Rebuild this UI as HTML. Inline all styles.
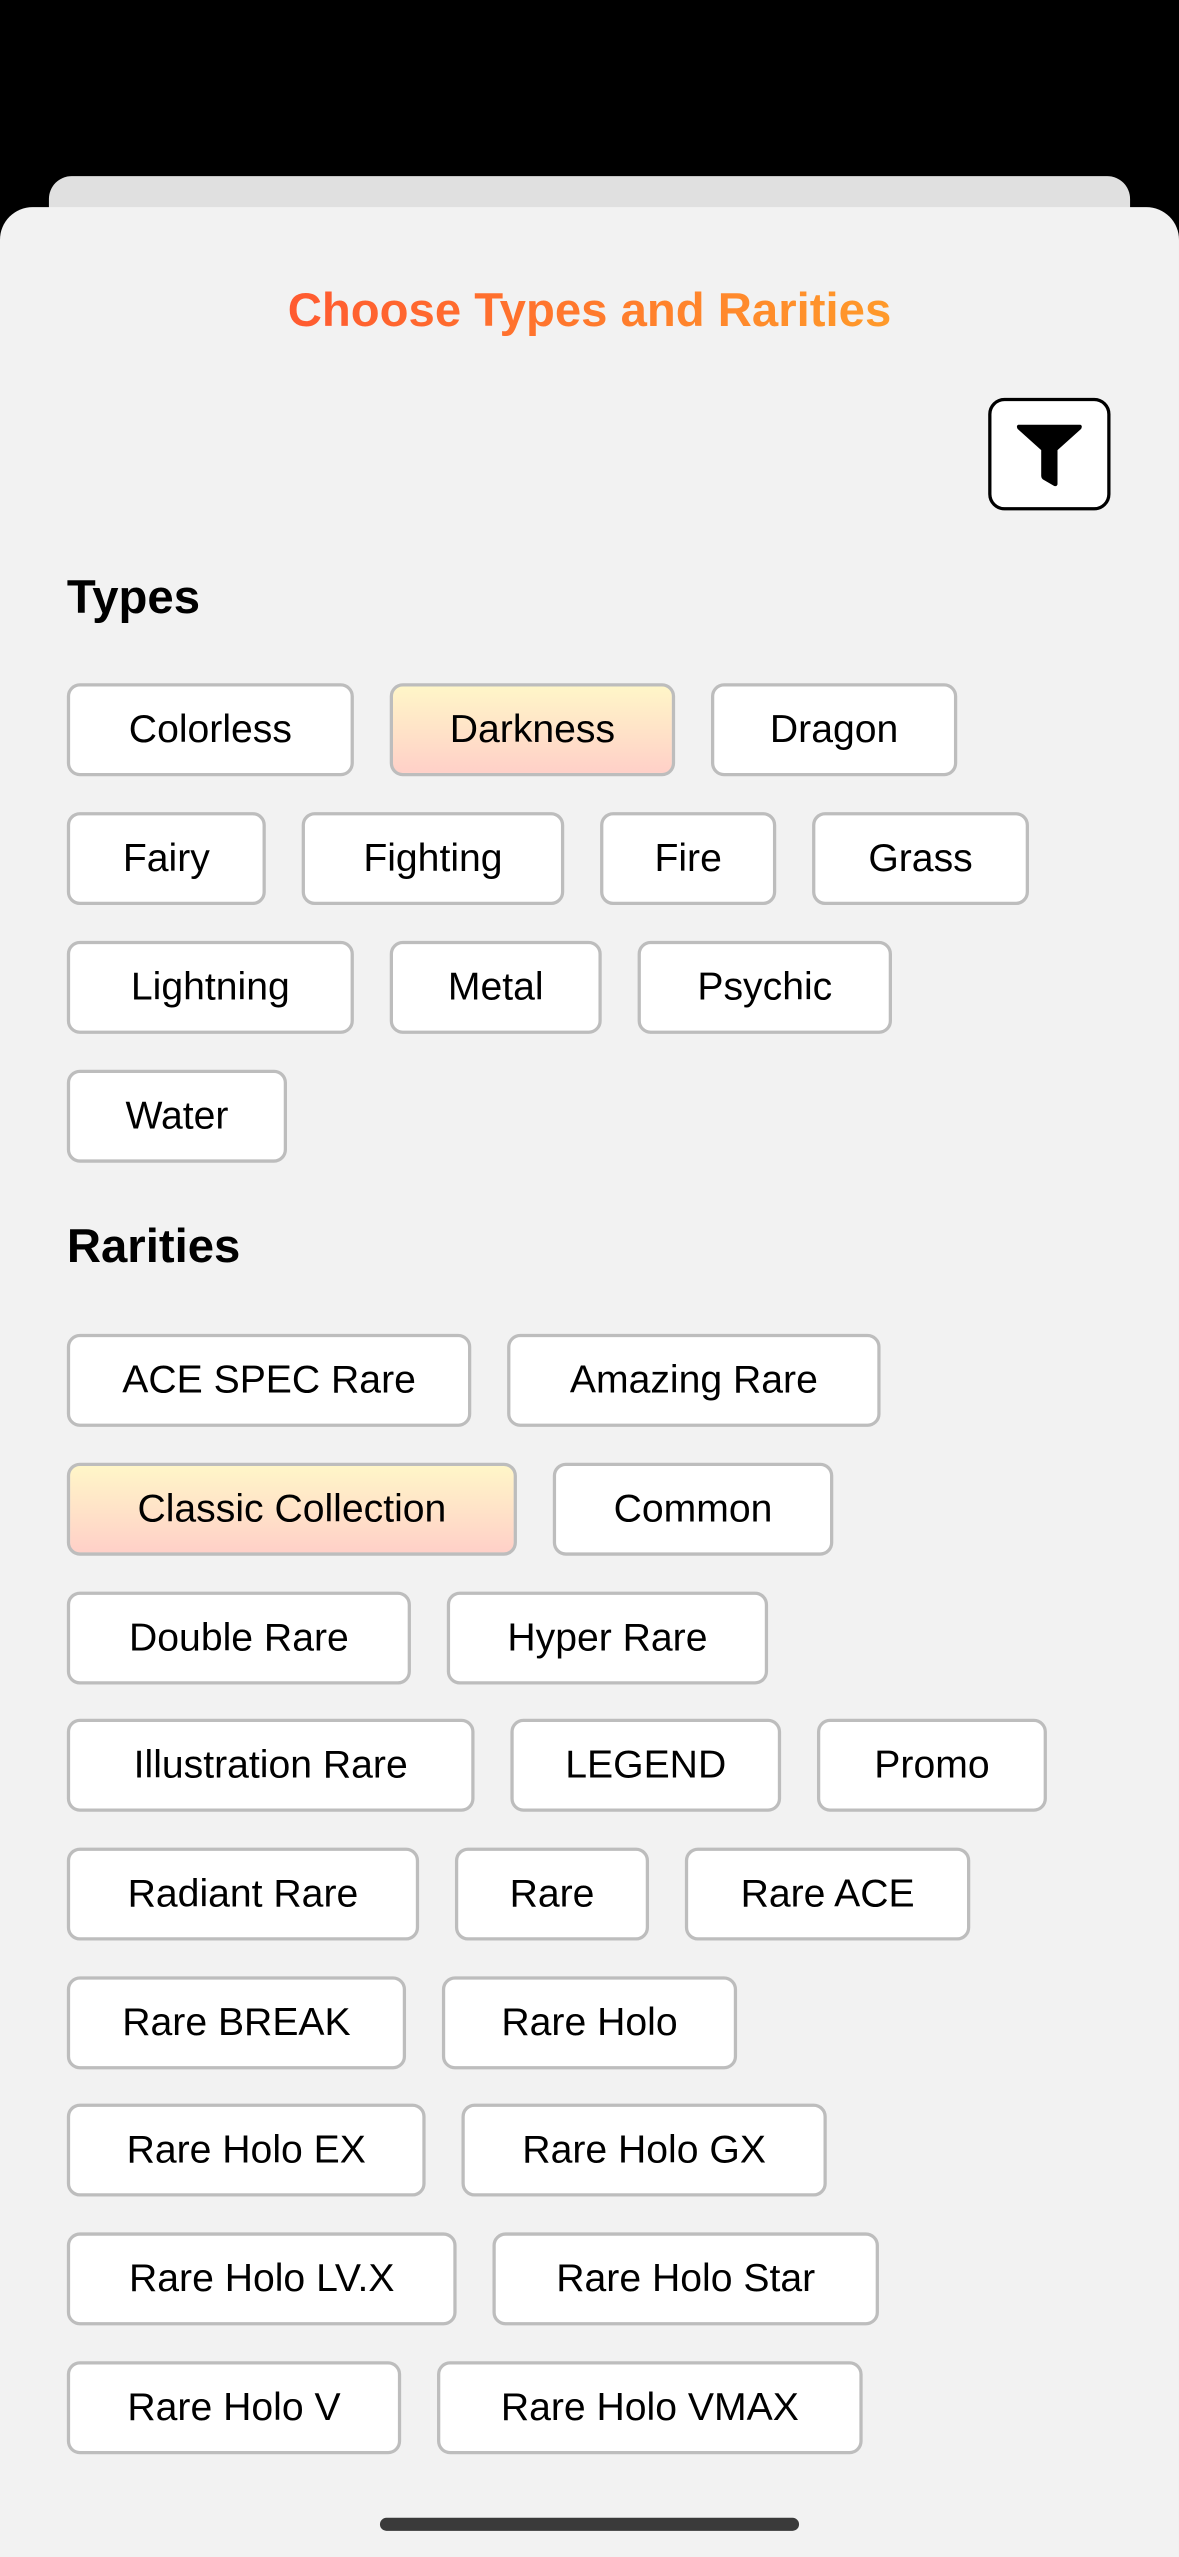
<!DOCTYPE html>
<html><head><meta charset="utf-8">
<style>
html,body{margin:0;padding:0;background:#000;width:1179px;height:2556px;overflow:hidden;}
#w{position:absolute;left:0;top:0;width:723px;height:1568px;transform:scale(1.6307);transform-origin:0 0;font-family:"Liberation Sans",sans-serif;}
.back{position:absolute;left:30px;top:108px;width:663px;height:60px;background:#e0e0e0;border-radius:14px 14px 0 0;}
.sheet{position:absolute;left:0;top:127px;width:723px;height:1441px;background:#f2f2f2;border-radius:20px 20px 0 0;}
.title{position:absolute;left:0;width:723px;top:173px;text-align:center;font-size:29px;font-weight:bold;line-height:36px;}
.title span{background:linear-gradient(90deg,#ff5a30,#ff9a2a);-webkit-background-clip:text;background-clip:text;color:transparent;}
.h{position:absolute;left:41px;font-size:29px;font-weight:bold;color:#000;line-height:34px;}
.c{position:absolute;height:57px;box-sizing:border-box;border:2px solid #bdbdbd;border-radius:8px;background:#fff;font-size:24px;line-height:53px;text-align:center;color:#000;white-space:nowrap;}
.s{background:linear-gradient(180deg,#fff6c8,#ffd0c8);}
.btn{position:absolute;left:606px;top:244px;width:75px;height:69px;box-sizing:border-box;border:2px solid #000;border-radius:10px;background:#fff;}
.home{position:absolute;left:233px;top:1544px;width:257px;height:8px;border-radius:4px;background:#3a3a3a;}
</style></head><body>
<div id="w">
<div class="back"></div>
<div class="sheet"></div>
<div class="title"><span>Choose Types and Rarities</span></div>
<div class="btn"></div>
<svg style="position:absolute;left:0;top:0" width="723" height="400"><path d="M624.5,260.5 L662.5,260.5 Q664,261 663,263 L648.5,276 L648.5,297 Q648,298.5 646.5,298 L639.5,294 Q638.5,293 638.5,292 L638.5,276 L624,263 Q623,261 624.5,260.5 Z" fill="#000"/></svg>
<div class="h" style="top:350px">Types</div>
<div class="c" style="left:41px;top:419px;width:176px">Colorless</div>
<div class="c s" style="left:239px;top:419px;width:175px">Darkness</div>
<div class="c" style="left:436px;top:419px;width:151px">Dragon</div>
<div class="c" style="left:41px;top:498px;width:122px">Fairy</div>
<div class="c" style="left:185px;top:498px;width:161px">Fighting</div>
<div class="c" style="left:368px;top:498px;width:108px">Fire</div>
<div class="c" style="left:498px;top:498px;width:133px">Grass</div>
<div class="c" style="left:41px;top:577px;width:176px">Lightning</div>
<div class="c" style="left:239px;top:577px;width:130px">Metal</div>
<div class="c" style="left:391px;top:577px;width:156px">Psychic</div>
<div class="c" style="left:41px;top:656px;width:135px">Water</div>
<div class="h" style="top:748px">Rarities</div>
<div class="c" style="left:41px;top:818px;width:248px">ACE SPEC Rare</div>
<div class="c" style="left:311px;top:818px;width:229px">Amazing Rare</div>
<div class="c s" style="left:41px;top:897px;width:276px">Classic Collection</div>
<div class="c" style="left:339px;top:897px;width:172px">Common</div>
<div class="c" style="left:41px;top:976px;width:211px">Double Rare</div>
<div class="c" style="left:274px;top:976px;width:197px">Hyper Rare</div>
<div class="c" style="left:41px;top:1054px;width:250px">Illustration Rare</div>
<div class="c" style="left:313px;top:1054px;width:166px">LEGEND</div>
<div class="c" style="left:501px;top:1054px;width:141px">Promo</div>
<div class="c" style="left:41px;top:1133px;width:216px">Radiant Rare</div>
<div class="c" style="left:279px;top:1133px;width:119px">Rare</div>
<div class="c" style="left:420px;top:1133px;width:175px">Rare ACE</div>
<div class="c" style="left:41px;top:1212px;width:208px">Rare BREAK</div>
<div class="c" style="left:271px;top:1212px;width:181px">Rare Holo</div>
<div class="c" style="left:41px;top:1290px;width:220px">Rare Holo EX</div>
<div class="c" style="left:283px;top:1290px;width:224px">Rare Holo GX</div>
<div class="c" style="left:41px;top:1369px;width:239px">Rare Holo LV.X</div>
<div class="c" style="left:302px;top:1369px;width:237px">Rare Holo Star</div>
<div class="c" style="left:41px;top:1448px;width:205px">Rare Holo V</div>
<div class="c" style="left:268px;top:1448px;width:261px">Rare Holo VMAX</div>
<div class="home"></div>
</div>
</body></html>
